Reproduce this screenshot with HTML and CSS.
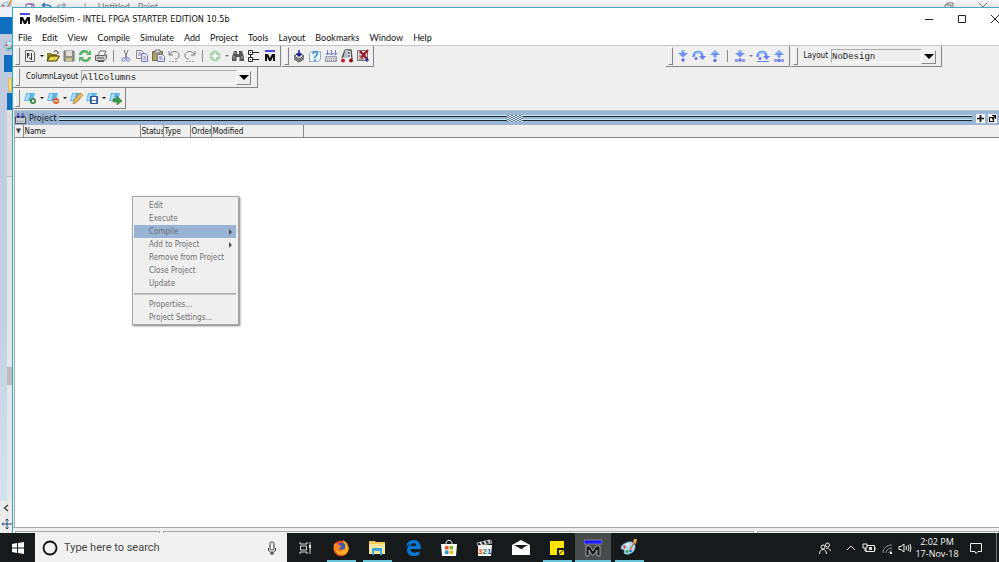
FILE: index.html
```html
<!DOCTYPE html>
<html lang="en">
<head>
<meta charset="utf-8">
<title>ModelSim - INTEL FPGA STARTER EDITION 10.5b</title>
<link rel="stylesheet" href="styles.css">
</head>
<body>
<svg class="defs" aria-hidden="true">
  <symbol id="palette" viewBox="0 0 18 18"><path d="M8 3c5-1 8 2 7 6-1 5-6 7-10 6-2-1 0-3-1-4-1-1-3 0-3-2 0-3 4-5 7-6z" fill="#b9dcef" stroke="#5a9cc0" stroke-width=".7"/><circle cx="4.500" cy="8" r="1.400" fill="#d8433b"/><circle cx="7.500" cy="5.500" r="1.300" fill="#f5f5f5"/><circle cx="7" cy="12.500" r="1.500" fill="#35a04d"/><circle cx="10.500" cy="12" r="1.300" fill="#2470c8"/><path d="M10 11L15 2" stroke="#c7752c" stroke-width="1.500"/><path d="M14 0l3 0-1 5-3-2z" fill="#eaa64c"/></symbol>
  <symbol id="mlogo" viewBox="0 0 12 12"><path d="M1 1h10" stroke="#1111dd" stroke-width="1.500"/><path d="M1 11V4h3l2 4 2-4h3v7H9V7l-2 4H5L3 7v4z" fill="#111"/></symbol>
  <symbol id="sheet" viewBox="0 0 14 14"><path d="M3 2h9l-2 8H1z" fill="#64b8ea"/><path d="M4 3h4L6 9H2z" fill="#a8dcf7"/><path d="M8 2L6 10" stroke="#2e86c4" stroke-width=".7"/></symbol>
  <symbol id="down" viewBox="0 0 14 14"><path d="M5.500 1h3v3H12L7 8.500 2 4h3.500z" fill="#6d91ef"/><path d="M6 1h2v2H6z" fill="#74cdf3"/><circle cx="7" cy="11" r="1.700" fill="#6670e4"/></symbol>
  <symbol id="over" viewBox="0 0 14 14"><path d="M1.500 8C2 2 9 1 10.500 7" fill="none" stroke="#6d91ef" stroke-width="2.600"/><path d="M3 5c2-3 5-2 6 0" fill="none" stroke="#a4e1f7"/><path d="M7 7h7l-3.500 4z" fill="#6d7fe9"/><circle cx="4" cy="9.500" r="1.500" fill="#6670e4"/></symbol>
  <symbol id="up" viewBox="0 0 14 14"><path d="M5.500 8.500h3V6H12L7 1 2 6h3.500z" fill="#6d91ef"/><path d="M5 4l2-2 2 2z" fill="#74cdf3"/><circle cx="7" cy="11.500" r="1.700" fill="#6670e4"/></symbol>
</svg>

<div class="backdrop-bar">
  <svg class="backdrop-logo" viewBox="0 0 18 18"><use href="#palette"/></svg>
  <svg class="backdrop-icons" viewBox="0 0 50 7"><path d="M2 7V4h8v3M4 4h4v3" fill="none" stroke="#8256a4"/><path d="M18 5h4c3 0 5 1 5 3M18 5l3-2M18 5l3 2" fill="none" stroke="#3a7cc0" stroke-width="1.500"/><path d="M42 5h-4c-3 0-5 1-5 3M42 5l-3-2M42 5l-3 2" fill="none" stroke="#9cabc2" stroke-width="1.500"/></svg>
  <span class="backdrop-title">|&nbsp;&nbsp;&nbsp;&nbsp;&nbsp;Untitled - Paint</span>
  <svg class="backdrop-ctl" viewBox="0 0 45 7"><path d="M3 7V5h6v2M5 5V3h6v4M37 3l4 4 4-4" fill="none" stroke="#777"/></svg>
</div>

<div class="screen">
  <aside class="backdrop-side" aria-hidden="true">
    <div class="side-blank"></div>
    <div class="side-blue"></div>
    <div class="side-paint"><svg viewBox="0 0 18 18"><use href="#palette"/></svg></div>
    <div class="side-blue inset-small"></div>
    <div class="side-folder"></div>
    <div class="side-blue inset"></div>
    <div class="side-panel"></div>
    <div class="side-track"></div>
    <div class="side-thumb"></div>
    <div class="side-track grow"></div>
    <svg class="side-cell" viewBox="0 0 12 14"><path d="M8 4L4.500 7 8 10" fill="none" stroke="#333" stroke-width="1.200"/></svg>
    <svg class="side-cell tall" viewBox="0 0 12 18"><path d="M7 4v10M2 9h10M5.500 5.500L7 4l1.500 1.500M5.500 12.500L7 14l1.500-1.500M3.500 7.500L2 9l1.500 1.500" fill="none" stroke="#23497c"/></svg>
  </aside>

  <main class="window">
    <header class="titlebar">
      <svg class="app-icon" viewBox="0 0 12 12"><use href="#mlogo"/></svg>
      <h1>ModelSim - INTEL FPGA STARTER EDITION 10.5b</h1>
      <button class="ctl" aria-label="Minimize"><svg viewBox="0 0 12 12"><path d="M2 6.500h8" stroke="#222"/></svg></button>
      <button class="ctl" aria-label="Maximize"><svg viewBox="0 0 12 12"><path d="M2.500 2.500h7v7h-7z" fill="none" stroke="#222"/></svg></button>
      <button class="ctl" aria-label="Close"><svg viewBox="0 0 12 12"><path d="M2 2l8 8M10 2l-8 8" fill="none" stroke="#222"/></svg></button>
    </header>
    <nav class="menubar">
      <button>File</button><button>Edit</button><button>View</button><button>Compile</button><button>Simulate</button><button>Add</button><button>Project</button><button>Tools</button><button>Layout</button><button>Bookmarks</button><button>Window</button><button>Help</button>
    </nav>

    <section class="toolbars">
      <div class="toolrow">
        <div class="group">
          <button class="tool" aria-label="New"><svg viewBox="0 0 14 14"><path d="M2.500 1.500h7l2 2v9h-9z" fill="#eee" stroke="#666"/><path d="M4.500 4v5M4 4.500h2v2H4.500M8.500 4v7M6 9l2 1" fill="none" stroke="#333"/></svg></button>
          <button class="drop" aria-label="New options"></button>
          <button class="tool" aria-label="Open"><svg viewBox="0 0 14 14"><path d="M1 4h4l1 1h5v2H4l-3 5z" fill="#8d8420"/><path d="M4 7h9.500l-3 5H1z" fill="#e8d43c" stroke="#343208"/><path d="M8 3c1-2 3-1 4 0v2" fill="none" stroke="#222"/></svg></button>
          <button class="tool" aria-label="Save"><svg viewBox="0 0 14 14"><path d="M2 2h10v10H2z" fill="#929284" stroke="#777"/><path d="M4 2h6v5H4z" fill="#ddd"/><path d="M4 9h6v3H4z" fill="#c5c98c"/></svg></button>
          <button class="tool" aria-label="Reload"><svg viewBox="0 0 14 14"><path d="M2 6c1-4 6-5 8-2M12 8c-1 4-6 5-8 2" fill="none" stroke="#5bb26b" stroke-width="2.600"/><path d="M8 6h5V1zM6 8H1v5z" fill="#5bb26b"/></svg></button>
          <button class="tool" aria-label="Print"><svg viewBox="0 0 14 14"><path d="M4 6l2-4h6l-2 4" fill="#fff" stroke="#666"/><path d="M1.500 6.500h9l2-1v4l-2 2h-9z" fill="#ccc" stroke="#666"/><path d="M3 9h7M4 12.500h6" stroke="#555"/></svg></button>
          <i class="sep"></i>
          <button class="tool" aria-label="Cut"><svg viewBox="0 0 14 14"><path d="M5 1l3 8M9 1L6 9" stroke="#777"/><circle cx="4.500" cy="10.500" r="1.700" fill="none" stroke="#6b78db"/><circle cx="9" cy="10.500" r="1.700" fill="none" stroke="#6b78db"/></svg></button>
          <button class="tool" aria-label="Copy"><svg viewBox="0 0 14 14"><path d="M1.500 1.500h5l2 2v6h-7z" fill="#eee" stroke="#888"/><path d="M6.500 4.500h4l2 2v6h-6z" fill="#e5e5fa" stroke="#7575b5"/><path d="M3 4h3M3 6h3M8 8h3M8 10h3" stroke="#8c8cac"/></svg></button>
          <button class="tool" aria-label="Paste"><svg viewBox="0 0 14 14"><path d="M1.500 2.500h10v9h-10z" fill="#a6a15b" stroke="#6e6a47"/><path d="M4 1h5v3H4z" fill="#ddd" stroke="#777"/><path d="M6.500 5.500h5l2 2v5h-7z" fill="#eef" stroke="#7474a4"/><path d="M8 8h3M8 10h4" stroke="#7777a5"/></svg></button>
          <button class="tool" aria-label="Undo"><svg viewBox="0 0 14 14"><path d="M2 2v4h4M2.500 5.500C6 0 13 3 12 7c0 2-2 3-4 3" fill="none" stroke="#777"/><path d="M2 12.500h9" stroke="#999" stroke-dasharray="2 1"/></svg></button>
          <button class="tool" aria-label="Redo"><svg viewBox="0 0 14 14"><path d="M12 2v4H8M11.500 5.500C8 0 1 3 2 7c0 2 2 3 4 3" fill="none" stroke="#777"/><path d="M3 12.500h9" stroke="#999" stroke-dasharray="2 1"/></svg></button>
          <i class="sep"></i>
          <button class="tool" aria-label="Add"><svg viewBox="0 0 14 14"><circle cx="7" cy="7" r="5" fill="#a5d8a5" stroke="#b9cdb9"/><path d="M7 4v6M4 7h6" stroke="#fff" stroke-width="2"/></svg></button>
          <button class="drop pale" aria-label="Add options"></button>
          <button class="tool" aria-label="Find"><svg viewBox="0 0 14 14"><path d="M3 2h3v3h2V2h3l2 6v4H8.500V8h-3v4H1V8z" fill="#555"/><path d="M3 7v3M11 7v3M4 3v2" stroke="#bbb"/></svg></button>
          <button class="tool" aria-label="Hierarchy"><svg viewBox="0 0 14 14"><path d="M1.500 1.500h4v4h-4zM1.500 8.500h4v4h-4zM3.500 5.500v3M3 3.500h1M3 10.500h1M6 3.500h6M6 10.500h6" fill="none" stroke="#222"/></svg></button>
          <button class="tool" aria-label="ModelSim"><svg viewBox="0 0 14 14"><use href="#mlogo" x="1" y="1" width="12" height="12"/></svg></button>
        </div>
        <div class="group">
          <button class="tool" aria-label="Compile"><svg viewBox="0 0 14 14"><path d="M2 7l5-3 5 3-5 3zM2 8.500l5 3 5-3M2 10l5 3 5-3" fill="#ddd" stroke="#444"/><path d="M7 1v6M4.500 4.500L7 7l2.500-2.500" fill="none" stroke="#14149b" stroke-width="1.500"/></svg></button>
          <button class="tool" aria-label="Compile out of date"><svg viewBox="0 0 14 14"><path d="M1.500 4.500l2-2h9v8l-2 2h-9z" fill="#eef6ff" stroke="#9aa9c2"/><path d="M5 5c0-3 5-3 4.500 0L7 8v1M7 10v2" fill="none" stroke="#2990dd" stroke-width="1.500"/></svg></button>
          <button class="tool" aria-label="Compile all"><svg viewBox="0 0 14 14"><path d="M1.500 7.500h11v5h-11z" fill="#d7d7df" stroke="#9c9cb5"/><path d="M3 9.500h9M3 11.500h9" stroke="#999" stroke-dasharray="1 1"/><path d="M3.500 1v5M7.500 1v5M11.500 1v5M2 4l1.500 2L5 4l2.500 2L9 4l2.500 2L13 4" fill="none" stroke="#7b80d0"/></svg></button>
          <button class="tool" aria-label="Simulate"><svg viewBox="0 0 14 14"><path d="M5 1h6l1 9M5 1L2 9M4 4h6M3 7h7" fill="none" stroke="#555" stroke-width="1.300"/><path d="M5 1h3v8H4z" fill="#b6c2d0"/><circle cx="3" cy="11.500" r="2" fill="#c91e28"/><circle cx="11" cy="11.500" r="2" fill="#8b111a"/></svg></button>
          <button class="tool" aria-label="Break"><svg viewBox="0 0 14 14"><path d="M1.500 1.500h10v10h-10z" fill="#ddd" stroke="#777"/><path d="M3 4h7M3 7h7M3 10h5" stroke="#666"/><path d="M4 2l7 8M12 1L5 9" stroke="#a61620" stroke-width="2"/><path d="M11 8v5M9 11h4" stroke="#1b1ba5"/></svg></button>
        </div>
        <div class="group push">
          <button class="tool" aria-label="Step into"><svg><use href="#down"/></svg></button>
          <button class="tool" aria-label="Step over"><svg><use href="#over"/></svg></button>
          <button class="tool" aria-label="Step out"><svg><use href="#up"/></svg></button>
          <i class="sep"></i>
          <button class="tool" aria-label="Step into current"><svg viewBox="0 0 14 14"><use href="#down"/><path d="M2 10h3v3H2zM9 10h3v3H9z" fill="#929bea"/></svg></button>
          <button class="drop pale" aria-label="Step options"></button>
          <button class="tool" aria-label="Step over current"><svg viewBox="0 0 14 14"><use href="#over"/><path d="M1 12.500h12" stroke="#6d7fe9"/></svg></button>
          <button class="tool" aria-label="Step out current"><svg viewBox="0 0 14 14"><use href="#up"/><path d="M2 10h3v3H2zM9 10h3v3H9z" fill="#929bea"/></svg></button>
        </div>
        <div class="group layout-group">
          <label for="layout">Layout</label>
          <span class="combo"><select id="layout"><option>NoDesign</option></select></span>
        </div>
      </div>
      <div class="toolrow">
        <div class="group column-group">
          <label for="columns">ColumnLayout</label>
          <span class="combo wide"><select id="columns"><option>AllColumns</option></select></span>
        </div>
      </div>
      <div class="toolrow">
        <div class="group">
          <button class="tool" aria-label="Add bookmark"><svg viewBox="0 0 14 14"><use href="#sheet"/><circle cx="10" cy="10" r="3" fill="#388b3b"/><circle cx="10" cy="10" r="1.200" fill="#fff"/></svg></button>
          <button class="drop" aria-label="Add bookmark options"></button>
          <button class="tool" aria-label="Remove bookmark"><svg viewBox="0 0 14 14"><use href="#sheet"/><circle cx="10" cy="10" r="3" fill="#dd5822"/><path d="M8 10h4" stroke="#fff"/></svg></button>
          <button class="drop" aria-label="Remove bookmark options"></button>
          <button class="tool" aria-label="Edit bookmarks"><svg viewBox="0 0 14 14"><use href="#sheet"/><path d="M4 13l1-4 6-7 3 2-6 7z" fill="#eab25b" stroke="#a86920" stroke-width=".6"/></svg></button>
          <button class="tool" aria-label="Save bookmarks"><svg viewBox="0 0 14 14"><use href="#sheet"/><path d="M5.500 5.500h7v7h-7z" fill="#4678c7" stroke="#2a5293"/><path d="M7 6h4v3H7zM7 10h4v2H7z" fill="#fff"/></svg></button>
          <button class="drop" aria-label="Save bookmark options"></button>
          <button class="tool" aria-label="Load bookmarks"><svg viewBox="0 0 14 14"><use href="#sheet"/><path d="M5 8h4V5l5 5-5 4v-3H5z" fill="#3b9a42" stroke="#27732e" stroke-width=".5"/></svg></button>
        </div>
      </div>
    </section>

    <section class="project">
      <div class="panebar">
        <svg class="pane-icon" viewBox="0 0 12 12"><path d="M.5 4.500h11v7H.5z" fill="#c9ced8" stroke="#444"/><path d="M2 9h8" stroke="#777" stroke-dasharray="1 1"/><path d="M3.500 0v5M8.500 0v5M1.500 3l2 2 2-2M6.500 3l2 2 2-2" fill="none" stroke="#1a1a99"/></svg>
        <h2>Project</h2>
        <div class="rails"><i class="grip"></i></div>
        <button class="pane-btn" aria-label="Maximize pane"><svg viewBox="0 0 9 9"><path d="M4.500 1v7M1 4.500h7" stroke="#111" stroke-width="1.700"/></svg></button>
        <button class="pane-btn" aria-label="Undock pane"><svg viewBox="0 0 9 9"><path d="M1.500 3.500h4v4h-4zM4 5l3-3M4 1.500h3.500V5" fill="none" stroke="#111" stroke-width="1.200"/></svg></button>
      </div>
      <table class="files">
        <colgroup><col class="c-mark"><col class="c-name"><col class="c-status"><col class="c-type"><col class="c-order"><col class="c-modified"><col></colgroup>
        <thead><tr><th class="mark">▼</th><th>Name</th><th>Status</th><th>Type</th><th>Order</th><th>Modified</th><th></th></tr></thead>
      </table>
      <div class="canvas">
        <div class="context" role="menu">
          <button role="menuitem">Edit</button>
          <button role="menuitem">Execute</button>
          <button role="menuitem" class="sub active">Compile</button>
          <button role="menuitem" class="sub">Add to Project</button>
          <button role="menuitem">Remove from Project</button>
          <button role="menuitem">Close Project</button>
          <button role="menuitem">Update</button>
          <hr>
          <button role="menuitem">Properties...</button>
          <button role="menuitem">Project Settings...</button>
        </div>
      </div>
    </section>
    <footer class="status"><span></span><span></span><span></span></footer>
  </main>
</div>

<footer class="taskbar">
  <button class="start" aria-label="Start"><svg viewBox="0 0 14 14"><path d="M1 3l5-1v4.500H1zM7 2l6-1v5.500H7zM1 7.500h5V12l-5-1zM7 7.500h6V13l-6-1z" fill="#fff"/></svg></button>
  <div class="search">
    <svg class="ring" viewBox="0 0 16 16"><circle cx="8" cy="8" r="6.500" fill="none" stroke="#111" stroke-width="1.800"/></svg>
    <input type="text" aria-label="Search" placeholder="Type here to search">
    <svg class="mic" viewBox="0 0 12 14"><rect x="4" y="1" width="4" height="8" rx="1.500" fill="none" stroke="#333"/><path d="M2.500 7v2c0 3 7 3 7 0V7M6 11v2M4 13h4" fill="none" stroke="#333"/></svg>
  </div>
  <button class="task" aria-label="Task view"><svg viewBox="0 0 18 18"><path d="M4 3v2h7V3M4 15v-2h7v2M4.500 7h6v4h-6zM14 3v3M14 9v6" fill="none" stroke="#ddd"/><path d="M13 6h2v3h-2z" fill="#eee"/></svg></button>
  <button class="task open" aria-label="Firefox"><svg viewBox="0 0 18 18"><circle cx="9" cy="9.500" r="7.700" fill="#ee4d26"/><path d="M2 5c0 5 2 11 8 11 5 0 8-5 6-9-1-4-4-5-5-6 0 3 3 5 2 7-1 3-6 4-8 1C3 7 4 4 2 5z" fill="#ffae21"/><circle cx="9.500" cy="7.500" r="3.700" fill="#345bb6"/><path d="M3 4c2 0 3 1 4 2l3 1-3 2c1 2 3 2 5 1-2 4-8 3-9-1z" fill="#ff8122"/></svg></button>
  <button class="task open" aria-label="File Explorer"><svg viewBox="0 0 18 18"><path d="M1 2h6l1 1h9v12H1z" fill="#f5c85b"/><path d="M1 5h16v10H1z" fill="#ffe5a0"/><path d="M4 9h10v7h-2v-4H6v4H4z" fill="#38a6de"/></svg></button>
  <button class="task" aria-label="Edge"><svg viewBox="0 0 18 18"><path d="M2 8C3 3 6 1 9.500 1 14 1 17 4 17 10H6.500c0 4 5 4.500 9 2.500v3.300C9 19 3 16 3 11c0-3 2-5 4-6-3 .5-4.500 2-5 3zm4.700-1h5.600C12 3 7.500 3 6.700 7z" fill="#0878d8"/></svg></button>
  <button class="task" aria-label="Store"><svg viewBox="0 0 18 18"><path d="M1 5h16l-1 12H2z" fill="#fff"/><path d="M6 5c0-5 6-5 6 0" fill="none" stroke="#fff"/><path d="M5 7h3.500v3.500H5z" fill="#ef4d29"/><path d="M9.500 7H13v3.500H9.500z" fill="#7ab51d"/><path d="M5 11.500h3.500V15H5z" fill="#139fda"/><path d="M9.500 11.500H13V15H9.500z" fill="#fbb813"/></svg></button>
  <button class="task" aria-label="Media Player Classic"><svg viewBox="0 0 18 18"><path d="M2 6h14l-1 11H2z" fill="#f4f4f4"/><path d="M1 4l14-3 1 3L2 7z" fill="#222" stroke="#ddd" stroke-width=".7"/><path d="M4 3l2 3M8 2l2 3M12 1l2 3M2 7h14" stroke="#eee" stroke-width="1.500"/><text x="2" y="15" class="digits"><tspan fill="#e2501f">3</tspan><tspan fill="#258a45">2</tspan><tspan fill="#2261b3">1</tspan></text></svg></button>
  <button class="task" aria-label="Mail"><svg viewBox="0 0 18 18"><path d="M0 6l9-5 9 5v10H0z" fill="#fff"/><path d="M2 6h14l-7 4z" fill="#181a1a"/><path d="M8 9l4 2-3-3z" fill="#181a1a"/></svg></button>
  <button class="task open" aria-label="Sticky Notes"><svg viewBox="0 0 18 18"><path d="M2 2h14v14H2z" fill="#ffe400"/><path d="M9 9h7v2l-5 5H9z" fill="#17191a"/><path d="M11 11h4l-4 4z" fill="#ffe400"/></svg></button>
  <button class="task open current" aria-label="ModelSim"><svg viewBox="0 0 18 18"><path d="M0 1h18v4H0z" fill="#1818ff" stroke="#bbb" stroke-width=".6"/><path d="M2 17V7h4l3 5 3-5h4v10h-3v-6l-3 5H8l-3-5v6z" fill="#161616" stroke="#bbb" stroke-width=".8"/></svg></button>
  <button class="task open" aria-label="Paint"><svg><use href="#palette"/></svg></button>
  <div class="tray">
    <button class="people" aria-label="People"><svg viewBox="0 0 14 14"><circle cx="5" cy="6" r="2" fill="none" stroke="#eee"/><path d="M1.500 13c0-6 7-6 7 0M8 8c2-2 4 0 4.500 2" fill="none" stroke="#eee"/><circle cx="9.500" cy="4" r="2" fill="none" stroke="#eee"/></svg></button>
    <button aria-label="Hidden icons"><svg viewBox="0 0 14 14"><path d="M3 9l4-4 4 4" fill="none" stroke="#eee"/></svg></button>
    <button aria-label="Battery"><svg viewBox="0 0 14 14"><path d="M5 4.500h7.500v6H4V8" fill="none" stroke="#eee"/><path d="M13 6v3M1 3h4v4H1zM3 7v3h2" fill="none" stroke="#eee"/><path d="M7 6h3v3H7z" fill="#ddd"/></svg></button>
    <button aria-label="Network"><svg viewBox="0 0 14 14"><path d="M3 12c0-5 4-8 9-8M6 12c0-3 3-5 6-5M9 12c0-2 1-2 3-2" fill="none" stroke="#999"/><path d="M10 11h2v2h-2z" fill="#eee"/></svg></button>
    <button aria-label="Volume"><svg viewBox="0 0 14 14"><path d="M1 5.500h2L6 3v8L3 8.500H1zM8 5q1 2 0 4M10 4q2 3 0 6M12 3q2 4 0 8" fill="none" stroke="#eee"/></svg></button>
    <time class="clock" datetime="2018-11-17T14:02">2:02 PM<br>17-Nov-18</time>
    <button class="notify" aria-label="Notifications"><svg viewBox="0 0 14 14"><path d="M1.500 2.500h11v8H9L7 12.500 6 10.500H1.500z" fill="none" stroke="#eee"/></svg></button>
  </div>
</footer>
</body>
</html>
```

FILE: styles.css
```css
:root {
  --face: #efefef;
  --ui: Lato, "Noto Sans", sans-serif;
  --small: "DejaVu Sans Condensed", "DejaVu Sans", sans-serif;
}
* { box-sizing: border-box; }
body {
  margin: 0;
  height: 100vh;
  display: flex;
  flex-direction: column;
  overflow: hidden;
  background: #c8d6e8;
  font: 9px/12px var(--ui);
  color: #111;
}
button {
  margin: 0;
  padding: 0;
  border: 0;
  background: none;
  font: inherit;
  color: inherit;
}
svg { display: block; }
h1, h2 { margin: 0; font: inherit; }
.defs { position: absolute; width: 0; height: 0; }

/* Window behind the main one */
.backdrop-bar {
  flex: none;
  height: 7px;
  display: flex;
  background: linear-gradient(#f6f6f6, #e6e6e6);
}
.backdrop-logo { width: 13px; height: 13px; }
.backdrop-icons { width: 50px; height: 7px; margin-left: 11px; }
.backdrop-title { margin: 3px 0 0 10px; line-height: 8px; color: #777; white-space: nowrap; }
.backdrop-ctl { width: 45px; height: 7px; margin: 0 12px 0 auto; }
.backdrop-side {
  flex: none;
  width: 12px;
  display: flex;
  flex-direction: column;
  background: linear-gradient(#bfcbdd, #c4d0e2 60%, #d9e4f0);
}
.side-blank { height: 10px; background: #edf1f5; }
.side-blue { height: 17px; background: #116fc2; }
.side-paint { height: 21px; padding: 5px 0 0 3px; overflow: hidden; }
.side-paint svg { width: 14px; height: 14px; }
.inset-small { margin-left: 4px; }
.side-folder { height: 14px; margin: 6px 0 1px 8px; background: #f2dc8c; border: 1px solid #d9bd5c; }
.inset { margin-left: 7px; }
.side-panel { height: 67px; margin-left: 7px; background: #dedede; border-bottom: 1px solid #bbb; }
.side-track { height: 190px; margin-left: 7px; background: #e4e6e8; }
.side-track.grow { height: auto; flex: 1; }
.side-thumb { height: 18px; margin-left: 7px; background: #bdbdbd; }
.side-cell { flex: none; width: 12px; height: 14px; background: #ececec; }
.side-cell.tall { height: 18px; }

.screen { position: relative; flex: 1; min-height: 0; display: flex; }
.window {
  flex: 1;
  min-width: 0;
  display: flex;
  flex-direction: column;
  border-top: 1px solid #48a9bf;
  border-left: 1px solid #2eaac4;
  background: var(--face);
}
.titlebar {
  flex: none;
  height: 22px;
  display: flex;
  align-items: center;
  background: #fff;
  padding-left: 6px;
  overflow: hidden;
}
.app-icon { width: 12px; height: 12px; margin-right: 4px; }
.titlebar h1 { margin-right: auto; white-space: nowrap; font: 9px/12px var(--small); }
.ctl { flex: none; width: 33px; padding-left: 10px; }
.ctl:last-child { width: 20px; }
.ctl svg { width: 12px; height: 12px; }
.menubar {
  flex: none;
  height: 15px;
  display: flex;
  gap: 10px;
  padding-left: 5px;
  background: #fff;
}

/* Toolbars */
.toolbars {
  flex: none;
  height: 66px;
  border-top: 1px solid #c4c4c4;
  border-bottom: 1px solid #c4c4c4;
}
.toolrow { display: flex; height: 21px; gap: 1px; }
.group {
  display: flex;
  align-items: center;
  padding: 0 2px;
  border-right: 1px solid #858585;
  border-bottom: 1px solid #858585;
}
.group::before {
  content: "";
  align-self: stretch;
  width: 3px;
  margin: 1px 2px 1px 0;
  border: 1px solid #fff;
  border-right-color: #858585;
  border-bottom-color: #858585;
}
.tool { width: 16px; height: 16px; display: grid; place-items: center; }
.tool svg { width: 14px; height: 14px; }
.drop { width: 7px; height: 16px; display: grid; place-items: center; }
.drop::before { content: ""; border: 2px solid transparent; border-top-color: #111; border-bottom: 0; }
.drop.pale::before { border-top-color: #777; }
.sep { width: 1px; height: 12px; margin: 0 4px; background: #8c8c8c; }
.group.push { margin-left: auto; }
.layout-group { margin-right: 57px; padding-right: 5px; }
.column-group { padding-right: 6px; }
.group label { font: 8px/12px var(--small); margin: 0 3px 0 4px; }
.combo { position: relative; width: 105px; height: 14px; display: flex; }
.combo.wide { width: 170px; }
.combo select {
  flex: 1;
  min-width: 0;
  margin: 0 14px 0 0;
  padding: 1px 0 0;
  appearance: none;
  border: 1px solid #aaa;
  border-right-color: #fff;
  border-bottom-color: #fff;
  border-radius: 0;
  background: var(--face);
  color: #222;
  font: 9px/12px "Liberation Mono", monospace;
}
.combo::after {
  content: "";
  position: absolute;
  right: 2px;
  top: 5px;
  border: 5px solid transparent;
  border-top-color: #000;
  border-bottom: 0;
}
.combo::before {
  content: "";
  position: absolute;
  right: 0;
  top: 1px;
  width: 13px;
  height: 12px;
  border: 1px solid #fff;
  border-right-color: #888;
  border-bottom-color: #888;
}

/* Project pane */
.project {
  flex: 1;
  min-height: 0;
  display: flex;
  flex-direction: column;
  margin-left: 1px;
  border-left: 1px solid #aaa;
}
.panebar {
  flex: none;
  height: 14px;
  display: flex;
  align-items: center;
  background: #9cb5d3;
  padding-right: 2px;
}
.pane-icon { width: 11px; height: 11px; }
.panebar h2 { font: 9px/12px var(--small); margin: 0 2px 0 3px; }
.rails {
  flex: 1;
  height: 7px;
  display: flex;
  justify-content: center;
  margin-right: 4px;
  background: linear-gradient(#c3edf5 1px, #1c2733 1px 2px, #9cb5d3 2px 4px, #c3edf5 4px 5px, #1c2733 5px 6px, #9cb5d3 6px);
}
.grip {
  width: 16px;
  height: 7px;
  background: repeating-conic-gradient(#d4e3ee 0 25%, #667f98 0 50%) 0 0 / 4px 2px;
}
.pane-btn {
  width: 9px;
  height: 9px;
  background: #f4f4f4;
  margin-right: 3px;
}
.pane-btn:last-child { margin-right: 0; }
.pane-btn svg { width: 9px; height: 9px; }
.files {
  flex: none;
  width: 100%;
  table-layout: fixed;
  border-collapse: collapse;
  border-bottom: 1px solid #888;
}
.files th {
  height: 12px;
  padding: 1px 0 0 1px;
  overflow: hidden;
  white-space: nowrap;
  text-align: left;
  font: 8px/11px var(--small);
  border-right: 1px solid #888;
}
.files th:last-child { border-right: 0; }
.files .mark { font-size: 7px; color: #444; }
.c-mark { width: 8px; }
.c-name { width: 117px; }
.c-status { width: 23px; }
.c-type { width: 27px; }
.c-order { width: 21px; }
.c-modified { width: 92px; }
.canvas { position: relative; flex: 1; background: #fff; }
.status {
  flex: none;
  height: 6px;
  display: flex;
  gap: 3px;
  padding: 3px 0 0 2px;
  border-top: 1px solid #aaa;
}
.status span { flex: 4 1 0; border: 1px solid #aaa; border-bottom: 0; }
.status span:first-child { flex: 0 0 145px; }
.status span:last-child { flex: 0 0 242px; }

.context {
  position: absolute;
  left: 117px;
  top: 58px;
  display: flex;
  flex-direction: column;
  width: 107px;
  padding: 2px 2px 0 1px;
  border: 1px solid #a5a5a5;
  background: var(--face);
  box-shadow: 1px 1px 2px #777;
  font: 8px/13px var(--small);
  color: #707070;
}
.context button { height: 13px; padding: 0 4px 0 15px; text-align: left; white-space: nowrap; }
.context .sub { display: flex; justify-content: space-between; align-items: center; }
.context .sub::after { content: ""; border: 3px solid transparent; border-left: 3px solid #555; border-right: 0; }
.context .active { background: #98b3d3; }
.context hr { width: 100%; height: 2px; margin: 3px 0; border: 0; border-top: 1px solid #aaa; background: #c8c8c8; }

/* Taskbar */
.taskbar {
  flex: none;
  height: 29px;
  display: flex;
  background: #171a1a;
  color: #f4f4f4;
}
.taskbar button { display: grid; place-items: center; }
.start { flex: none; width: 35px; }
.start svg { width: 14px; height: 14px; }
.search {
  flex: none;
  width: 252px;
  display: flex;
  align-items: center;
  gap: 6px;
  padding: 0 9px 0 7px;
  background: #f1f1f1;
}
.ring { flex: none; width: 16px; height: 16px; }
.search input {
  flex: 1;
  min-width: 0;
  padding: 0;
  border: 0;
  background: none;
  font: 11px/16px Roboto, sans-serif;
}
.search input::placeholder { color: #444; }
.mic { flex: none; width: 12px; height: 14px; }
.task { flex: none; width: 36px; }
.task svg { width: 18px; height: 18px; }
.taskbar .open { background: linear-gradient(#69c5da, #69c5da) center bottom / 29px 2px no-repeat; }
.taskbar .current { background: linear-gradient(#69c5da, #69c5da) center bottom / 100% 2px no-repeat #484b4c; }
.digits { font: bold 8px "Liberation Sans", sans-serif; }
.tray { display: flex; align-items: center; margin: 0 2px 0 auto; padding-right: 13px; border-right: 1px solid #777; }
.tray button { width: 18px; height: 18px; }
.tray svg { width: 14px; height: 14px; }
.tray .people { margin-right: 8px; }
.clock { width: 46px; text-align: center; white-space: nowrap; font-family: "Open Sans", sans-serif; }
.tray .notify { width: 14px; margin-left: 9px; }
```
